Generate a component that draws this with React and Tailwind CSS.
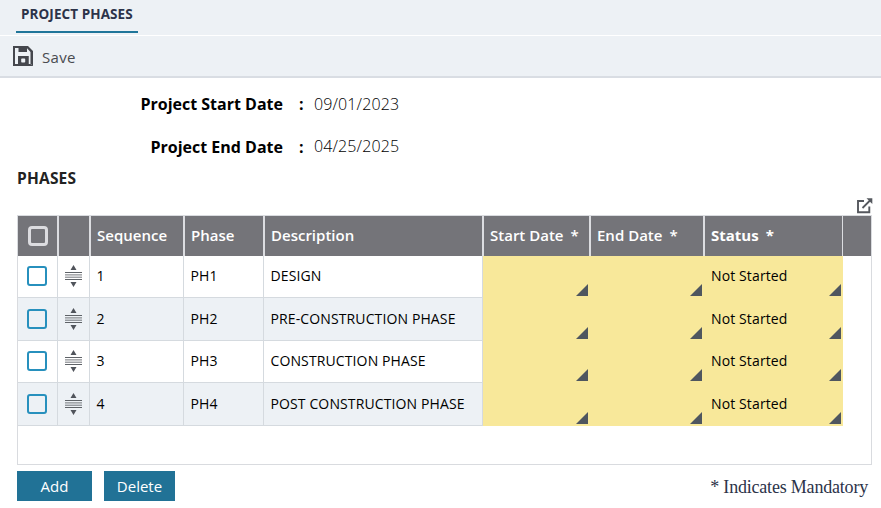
const COLS = 'grid grid-cols-[40px_32px_94px_80px_219px_107px_114px_139px_28px]';

const phases = [
  { seq: 1, code: 'PH1', name: 'DESIGN' },
  { seq: 2, code: 'PH2', name: 'PRE-CONSTRUCTION PHASE' },
  { seq: 3, code: 'PH3', name: 'CONSTRUCTION PHASE' },
  { seq: 4, code: 'PH4', name: 'POST CONSTRUCTION PHASE' },
];

function SaveIcon() {
  return (
    <svg width="20" height="20" viewBox="0 0 20 20" className="shrink-0">
      <path
        fill="#45474d"
        fillRule="evenodd"
        d="M0 0H15L20 5V20L17.5 18V6L14 2.3V6H5.5V2H2V18H5V10H15.5V18H18L20 20H0Z"
      />
      <path d="M5 10H15.5V19H5Z" fill="#45474d" />
      <rect x="8.2" y="12.6" width="4" height="4" rx="0.8" fill="#edf1f5" />
    </svg>
  );
}

function DragIcon() {
  return (
    <svg width="17" height="22" viewBox="0 0 17 22">
      <path d="M8.5 0L11.5 5H5.5ZM8.5 22L5.5 17H11.5Z" fill="#50545b" />
      <path d="M0 7.5H17M0 14.5H17" stroke="#5f6368" strokeWidth="1.1" />
      <path d="M0 9.9H17M0 12.2H17" stroke="#63676d" strokeWidth="0.9" />
    </svg>
  );
}

function PopOutIcon() {
  return (
    <svg width="16" height="16" viewBox="0 0 16 16">
      <path d="M7 3H1V14.3H12.3V8.5" fill="none" stroke="#55585e" strokeWidth="1.9" />
      <path d="M5.5 10L13 2.5" stroke="#55585e" strokeWidth="1.8" />
      <path d="M9.5 0.3H15.3V6Z" fill="#55585e" />
    </svg>
  );
}

function Corner() {
  return (
    <svg width="12" height="12" viewBox="0 0 12 12" className="mr-[2px] mb-[2px] self-end">
      <path d="M12 0V12H0Z" fill="#4f565f" />
    </svg>
  );
}

function HeadCell({ children, className = 'font-semibold' }) {
  return (
    <div className={`flex items-center border-r border-l border-[#dcdde1] pb-[2px] pl-[6px] text-[15px] text-white ${className}`}>
      {children}
    </div>
  );
}

function Field({ label, value, valueClass = '' }) {
  return (
    <div className="flex h-[43px] items-center">
      <span className="w-[283px] text-right text-[16px] font-bold text-black">{label}</span>
      <span className="w-[31px] pl-4 text-[16px] font-bold text-black">:</span>
      <span className={`text-[16px] font-light tracking-[0.12px] text-black ${valueClass}`}>{value}</span>
    </div>
  );
}

function Row({ phase, index }) {
  const odd = index % 2 === 1;
  const line = 'flex items-center border-r border-b border-[#d5dadf]';
  const pad = odd ? '' : 'pb-px';
  const cell = `${line} pb-[2px] pl-[6.5px]`;
  const yellow = 'flex items-center justify-end bg-[#f8e89a]';
  return (
    <div className={`${COLS} text-[14px] font-medium tracking-[0.12px] text-black ${odd ? 'h-[43px]' : 'h-[42px]'}`}>
      <div className={`col-span-5 grid grid-cols-subgrid ${odd ? 'bg-[#edf1f5]' : 'bg-white'}`}>
        <div className={`${line} ${pad} pl-[9px]`}>
          <span className="h-5 w-5 rounded-[3px] border-2 border-[#2790bd]" />
        </div>
        <div className={`${line} ${pad} justify-center`}>
          <DragIcon />
        </div>
        <div className={cell}>{phase.seq}</div>
        <div className={cell}>{phase.code}</div>
        <div className={cell}>{phase.name}</div>
      </div>
      <div className={yellow}><Corner /></div>
      <div className={yellow}><Corner /></div>
      <div className="flex items-center justify-between bg-[#f8e89a] pl-[7px]">
        <span className="pb-[3px]">Not Started</span>
        <Corner />
      </div>
    </div>
  );
}

export default function App() {
  return (
    <div className="h-[508px] w-[881px] overflow-hidden bg-white font-['Open_Sans','Noto_Sans',sans-serif]">
      <div className="flex h-[35px] bg-[#edf1f5] pl-4">
        <div className="h-[33px] w-[122px] border-b-2 border-[#1f7599] pl-[5px] text-[13.5px] leading-[28px] font-bold tracking-[0.08px] whitespace-nowrap text-[#2c3349]">
          PROJECT PHASES
        </div>
      </div>
      <div className="mt-px flex h-[42px] items-center border-b-2 border-[#d9dde3] bg-[#edf1f5] pl-[13px]">
        <SaveIcon />
        <span className="mt-[2px] ml-[9px] text-[15px] font-medium tracking-[0.3px] text-[#494b50]">Save</span>
      </div>

      <div className="pt-[4px]">
        <Field label="Project Start Date" value="09/01/2023" />
        <Field label="Project End Date" value="04/25/2025" valueClass="pb-[2px]" />
      </div>

      <div className="flex h-[47px] justify-between pr-[8px] pl-[17px]">
        <h2 className="text-[15.5px] leading-[20px] font-bold tracking-[0.2px] text-[#222]">PHASES</h2>
        <div className="pt-[30px]"><PopOutIcon /></div>
      </div>

      <div className="ml-[17px] h-[250px] w-[855px] border border-[#d9dbdf]">
        <div className={`${COLS} h-10 bg-[#747479]`}>
          <div className="flex items-center border-r border-[#dcdde1] pl-[10px]">
            <span className="h-5 w-5 rounded-[4px] border-[3px] border-[#dcdce0]" />
          </div>
          <HeadCell />
          <HeadCell>Sequence</HeadCell>
          <HeadCell>Phase</HeadCell>
          <HeadCell>Description</HeadCell>
          <HeadCell>Start Date<span className="ml-[7px]">*</span></HeadCell>
          <HeadCell>End Date<span className="ml-[7px]">*</span></HeadCell>
          <HeadCell className="font-bold">Status<span className="ml-[7px]">*</span></HeadCell>
          <div />
        </div>
        {phases.map((phase, i) => (
          <Row key={phase.seq} phase={phase} index={i} />
        ))}
      </div>

      <div className="mt-[6px] flex items-center pr-[13px] pl-[17px]">
        <button className="h-[30px] w-[75px] bg-[#217296] text-[15px] text-white">Add</button>
        <button className="ml-3 h-[30px] w-[71px] bg-[#217296] text-[15px] text-white">Delete</button>
        <span className="mt-[2px] ml-auto font-['Liberation_Serif',serif] text-[18px] tracking-[-0.2px] text-[#2c3349]">* Indicates Mandatory</span>
      </div>
    </div>
  );
}
